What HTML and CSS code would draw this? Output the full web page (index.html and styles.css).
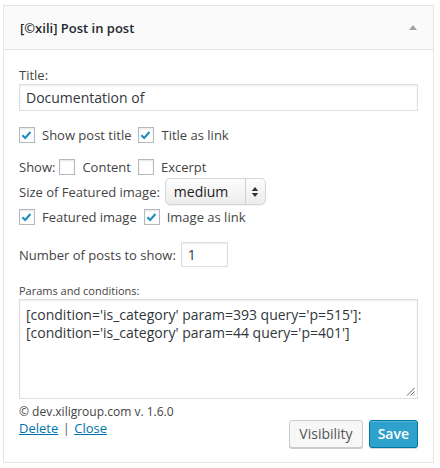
FILE: index.html
```html
<!DOCTYPE html>
<html>
<head>
<meta charset="utf-8">
<link rel="stylesheet" href="styles.css">
</head>
<body>
<div class="widget">
  <div class="widget-top">
    <h3 class="widget-title">[©xili] Post in post</h3>
    <span class="toggle"></span>
  </div>
  <div class="widget-inside">
    <label class="lbl-title">Title:</label>
    <div class="text-input">Documentation of</div>

    <div class="row row-checks1">
      <span class="cb checked"><svg width="16" height="16" viewBox="0 0 16 16"><path d="M3.6 8.2 L6.6 11.2 L12.2 4.8" fill="none" stroke="#1e8cbe" stroke-width="2.2"/></svg></span>
      <span class="cb-label">Show post title</span>
      <span class="cb checked"><svg width="16" height="16" viewBox="0 0 16 16"><path d="M3.6 8.2 L6.6 11.2 L12.2 4.8" fill="none" stroke="#1e8cbe" stroke-width="2.2"/></svg></span>
      <span class="cb-label">Title as link</span>
    </div>

    <div class="row row-show">
      <span class="plain">Show:</span>
      <span class="cb"></span>
      <span class="cb-label">Content</span>
      <span class="cb"></span>
      <span class="cb-label">Excerpt</span>
    </div>

    <div class="row row-select">
      <span class="plain">Size of Featured image:</span>
      <div class="select">
        <span class="select-value">medium</span>
        <span class="select-arrows">
          <svg width="8" height="12" viewBox="0 0 8 12"><path d="M4 1 L7.2 5 L0.8 5 Z M4 11 L7.2 7 L0.8 7 Z" fill="#333"/></svg>
        </span>
      </div>
    </div>

    <div class="row row-checks2">
      <span class="cb checked"><svg width="16" height="16" viewBox="0 0 16 16"><path d="M3.6 8.2 L6.6 11.2 L12.2 4.8" fill="none" stroke="#1e8cbe" stroke-width="2.2"/></svg></span>
      <span class="cb-label">Featured image</span>
      <span class="cb checked"><svg width="16" height="16" viewBox="0 0 16 16"><path d="M3.6 8.2 L6.6 11.2 L12.2 4.8" fill="none" stroke="#1e8cbe" stroke-width="2.2"/></svg></span>
      <span class="cb-label">Image as link</span>
    </div>

    <div class="row row-number">
      <span class="plain">Number of posts to show:</span>
      <div class="num-input">1</div>
    </div>

    <div class="lbl-params">Params and conditions:</div>
    <div class="textarea">
      <div>[condition='is_category' param=393 query='p=515']:</div>
      <div>[condition='is_category' param=44 query='p=401']</div>
      <svg class="grip" width="9" height="9" viewBox="0 0 9 9"><path d="M8.5 1 L1 8.5 M8.5 4.5 L4.5 8.5 M8.5 7.5 L7.5 8.5" stroke="#555" stroke-width="0.9"/></svg>
    </div>

    <div class="footer">
      <div class="credit">© dev.xiligroup.com v. 1.6.0</div>
      <div class="links"><a href="#">Delete</a> <span class="sep">|</span> <a href="#">Close</a></div>
      <div class="buttons">
        <span class="btn">Visibility</span>
        <span class="btn btn-primary">Save</span>
      </div>
    </div>
  </div>
</div>
</body>
</html>
```
FILE: styles.css
```css
html, body {
  margin: 0;
  padding: 0;
  background: #fff;
}
body {
  padding: 5px 6px 0 3px;
  font-family: "Open Sans", "Liberation Sans", sans-serif;
  font-size: 13px;
  color: #444;
}
.widget {
  width: 429px;
  border: 1px solid #e5e5e5;
  box-shadow: 0 1px 1px rgba(0,0,0,0.04);
  background: #fff;
}
.widget-top {
  height: 43px;
  background: #fafafa;
  border-bottom: 1px solid #e5e5e5;
  display: flex;
  align-items: center;
  justify-content: space-between;
  padding: 0 16px 0 16px;
}
.widget-title {
  margin: 0;
  font-size: 13px;
  font-weight: 600;
  color: #23282d;
}
.toggle {
  width: 0;
  height: 0;
  border-left: 4px solid transparent;
  border-right: 4px solid transparent;
  border-bottom: 5px solid #a0a5aa;
}
.widget-inside {
  padding: 17px 15px 14px 15px;
}
.lbl-title {
  display: block;
  line-height: 17px;
  color: #444;
}
.text-input {
  height: 25px;
  border: 1px solid #ddd;
  box-shadow: inset 0 1px 2px rgba(0,0,0,0.07);
  padding: 0 6px;
  font-size: 14px;
  line-height: 25px;
  color: #32373c;
}
.row {
  display: flex;
  align-items: center;
  height: 20px;
}
.row-checks1 { margin-top: 14px; }
.row-show { margin-top: 12px; }
.row-select { margin-top: 1px; height: 27px; }
.row-checks2 { margin-top: 2px; }
.row-number { margin-top: 15px; height: 25px; }
.cb {
  width: 14px;
  height: 14px;
  border: 1px solid #b4b9be;
  background: #fff;
  box-shadow: inset 0 1px 2px rgba(0,0,0,0.1);
  display: inline-flex;
  flex: none;
}
.cb svg { margin: -1px 0 0 -1px; }
.cb-label {
  margin: 0 7px 0 7px;
}
.plain {
  margin-right: 5px;
}
.row-show .plain { margin-right: 4px; }
.select {
  width: 99px;
  height: 25px;
  border: 1px solid #d6d6d6;
  border-radius: 5px;
  background: linear-gradient(#fdfdfd, #ececec);
  display: flex;
  align-items: center;
  box-shadow: 0 1px 1px rgba(0,0,0,0.05);
}
.select-value {
  flex: 1;
  padding-left: 8px;
  font-size: 14px;
  color: #222;
}
.select-arrows {
  width: 19px;
  height: 25px;
  border-left: 1px solid #d0d0d0;
  display: flex;
  align-items: center;
  justify-content: center;
}
.num-input {
  width: 39px;
  height: 23px;
  border: 1px solid #ddd;
  box-shadow: inset 0 1px 2px rgba(0,0,0,0.07);
  padding: 0 0 0 6px;
  font-size: 14px;
  line-height: 23px;
  color: #32373c;
}
.lbl-params {
  margin-top: 17px;
  font-size: 11px;
  line-height: 14px;
  color: #444;
}
.textarea {
  position: relative;
  height: 92px;
  margin-top: 1px;
  border: 1px solid #ddd;
  box-shadow: inset 0 1px 2px rgba(0,0,0,0.07);
  padding: 6px 6px 0 6px;
  font-size: 14px;
  line-height: 18px;
  color: #32373c;
}
.grip {
  position: absolute;
  right: 2px;
  bottom: 2px;
}
.footer {
  display: grid;
  grid-template-columns: 1fr auto;
  margin-top: 5px;
}
.credit {
  grid-column: 1 / 3;
  font-size: 12px;
  line-height: 15px;
  color: #444;
}
.links {
  line-height: 18px;
  font-size: 13px;
  align-self: start;
}
.links a {
  color: #0073aa;
  text-decoration: underline;
}
.links .sep {
  color: #666;
  margin: 0 1px;
}
.buttons {
  display: flex;
  gap: 6px;
  margin-top: 1px;
}
.btn {
  display: inline-block;
  height: 26px;
  line-height: 26px;
  padding: 0 9px;
  border: 1px solid #ccc;
  border-radius: 3px;
  background: #f7f7f7;
  box-shadow: 0 1px 0 #ccc;
  font-size: 14px;
  color: #555;
}
.btn-primary {
  padding: 0 8px;
  background: #2ea2cc;
  border-color: #0074a2;
  box-shadow: inset 0 1px 0 rgba(120,200,230,0.5), 0 1px 0 rgba(0,0,0,0.15);
  color: #fff;
  font-weight: 600;
}
```
